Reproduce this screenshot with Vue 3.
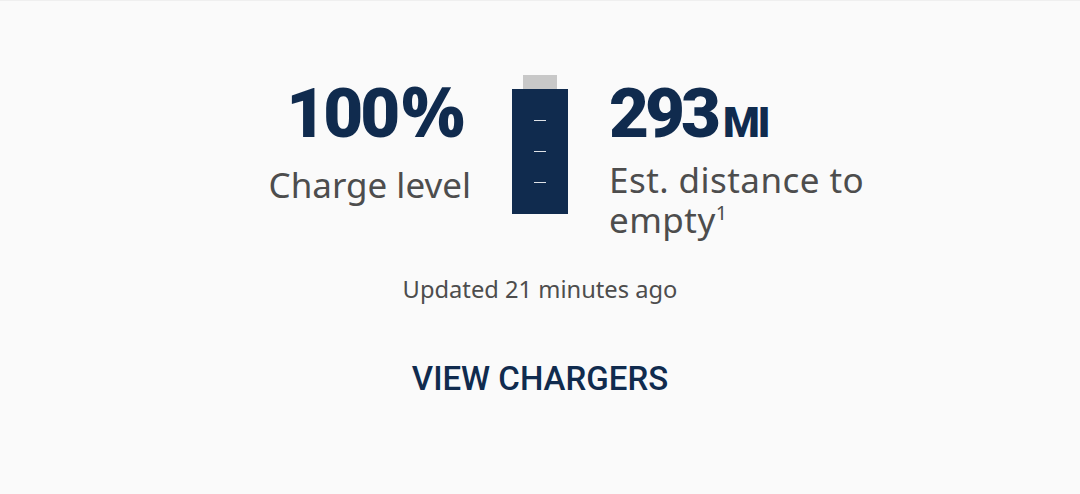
<template>
  <div class="charge-card">
    <div class="stats">
      <div class="stat stat-left">
        <div class="big">100<span class="pct">%</span></div>
        <div class="label label-left">Charge level</div>
      </div>
      <div class="battery">
        <div class="cap"></div>
        <div class="body">
          <span v-for="n in 3" :key="n" class="tick"></span>
        </div>
      </div>
      <div class="stat stat-right">
        <div class="big">293<span class="unit">MI</span></div>
        <div class="label label-right">Est. distance to<br />empty<sup>1</sup></div>
      </div>
    </div>
    <div class="updated">Updated 21 minutes ago</div>
    <div class="action">VIEW CHARGERS</div>
  </div>
</template>

<script setup>
</script>

<style>
html, body {
  margin: 0;
  background: #fafafa;
}
</style>

<style scoped>
.charge-card {
  height: 494px;
  box-sizing: border-box;
  padding-top: 74px;
  border-top: 1px solid #efefef;
  background: #fafafa;
  font-family: "Noto Sans", sans-serif;
  overflow: hidden;
}

.stats {
  display: grid;
  grid-template-columns: 1fr 56px 1fr;
  column-gap: 41px;
  height: 170px;
}

.stat-left {
  text-align: right;
}

.big {
  font-family: Roboto, sans-serif;
  font-size: 69px;
  line-height: 76px;
  font-weight: 900;
  letter-spacing: -4px;
  color: #102b4e;
  white-space: nowrap;
  padding-top: 1px;
}

.stat-left .big {
  padding-right: 6px;
  letter-spacing: -3px;
}

.pct {
  font-family: "Noto Sans", sans-serif;
  font-weight: 800;
  font-size: 69px;
  line-height: 0;
  letter-spacing: 0;
  margin-left: 4px;
}

.unit {
  font-size: 42px;
  letter-spacing: -2px;
  margin-left: 6px;
}

.label {
  font-size: 35px;
  line-height: 40px;
  color: #4d4d4d;
}

.label-left {
  margin-top: 13px;
}

.label-right {
  margin-top: -1px;
  letter-spacing: 0.45px;
}

sup {
  font-size: 20px;
  line-height: 0;
}

.battery {
  display: flex;
  flex-direction: column;
  align-items: center;
}

.cap {
  width: 34px;
  height: 14px;
  background: #c8c8c8;
}

.body {
  width: 56px;
  height: 125px;
  box-sizing: border-box;
  background: #102b4e;
  display: flex;
  flex-direction: column;
  align-items: center;
  gap: 30px;
  padding-top: 31px;
}

.tick {
  width: 12px;
  height: 1px;
  background: #dfe3e8;
}

.updated {
  margin-top: 28px;
  text-align: center;
  font-size: 23.7px;
  line-height: 32px;
  color: #4d4d4d;
}

.action {
  margin-top: 54px;
  text-align: center;
  font-family: Roboto, sans-serif;
  font-weight: 500;
  font-size: 33px;
  line-height: 40px;
  color: #102b4e;
}
</style>
